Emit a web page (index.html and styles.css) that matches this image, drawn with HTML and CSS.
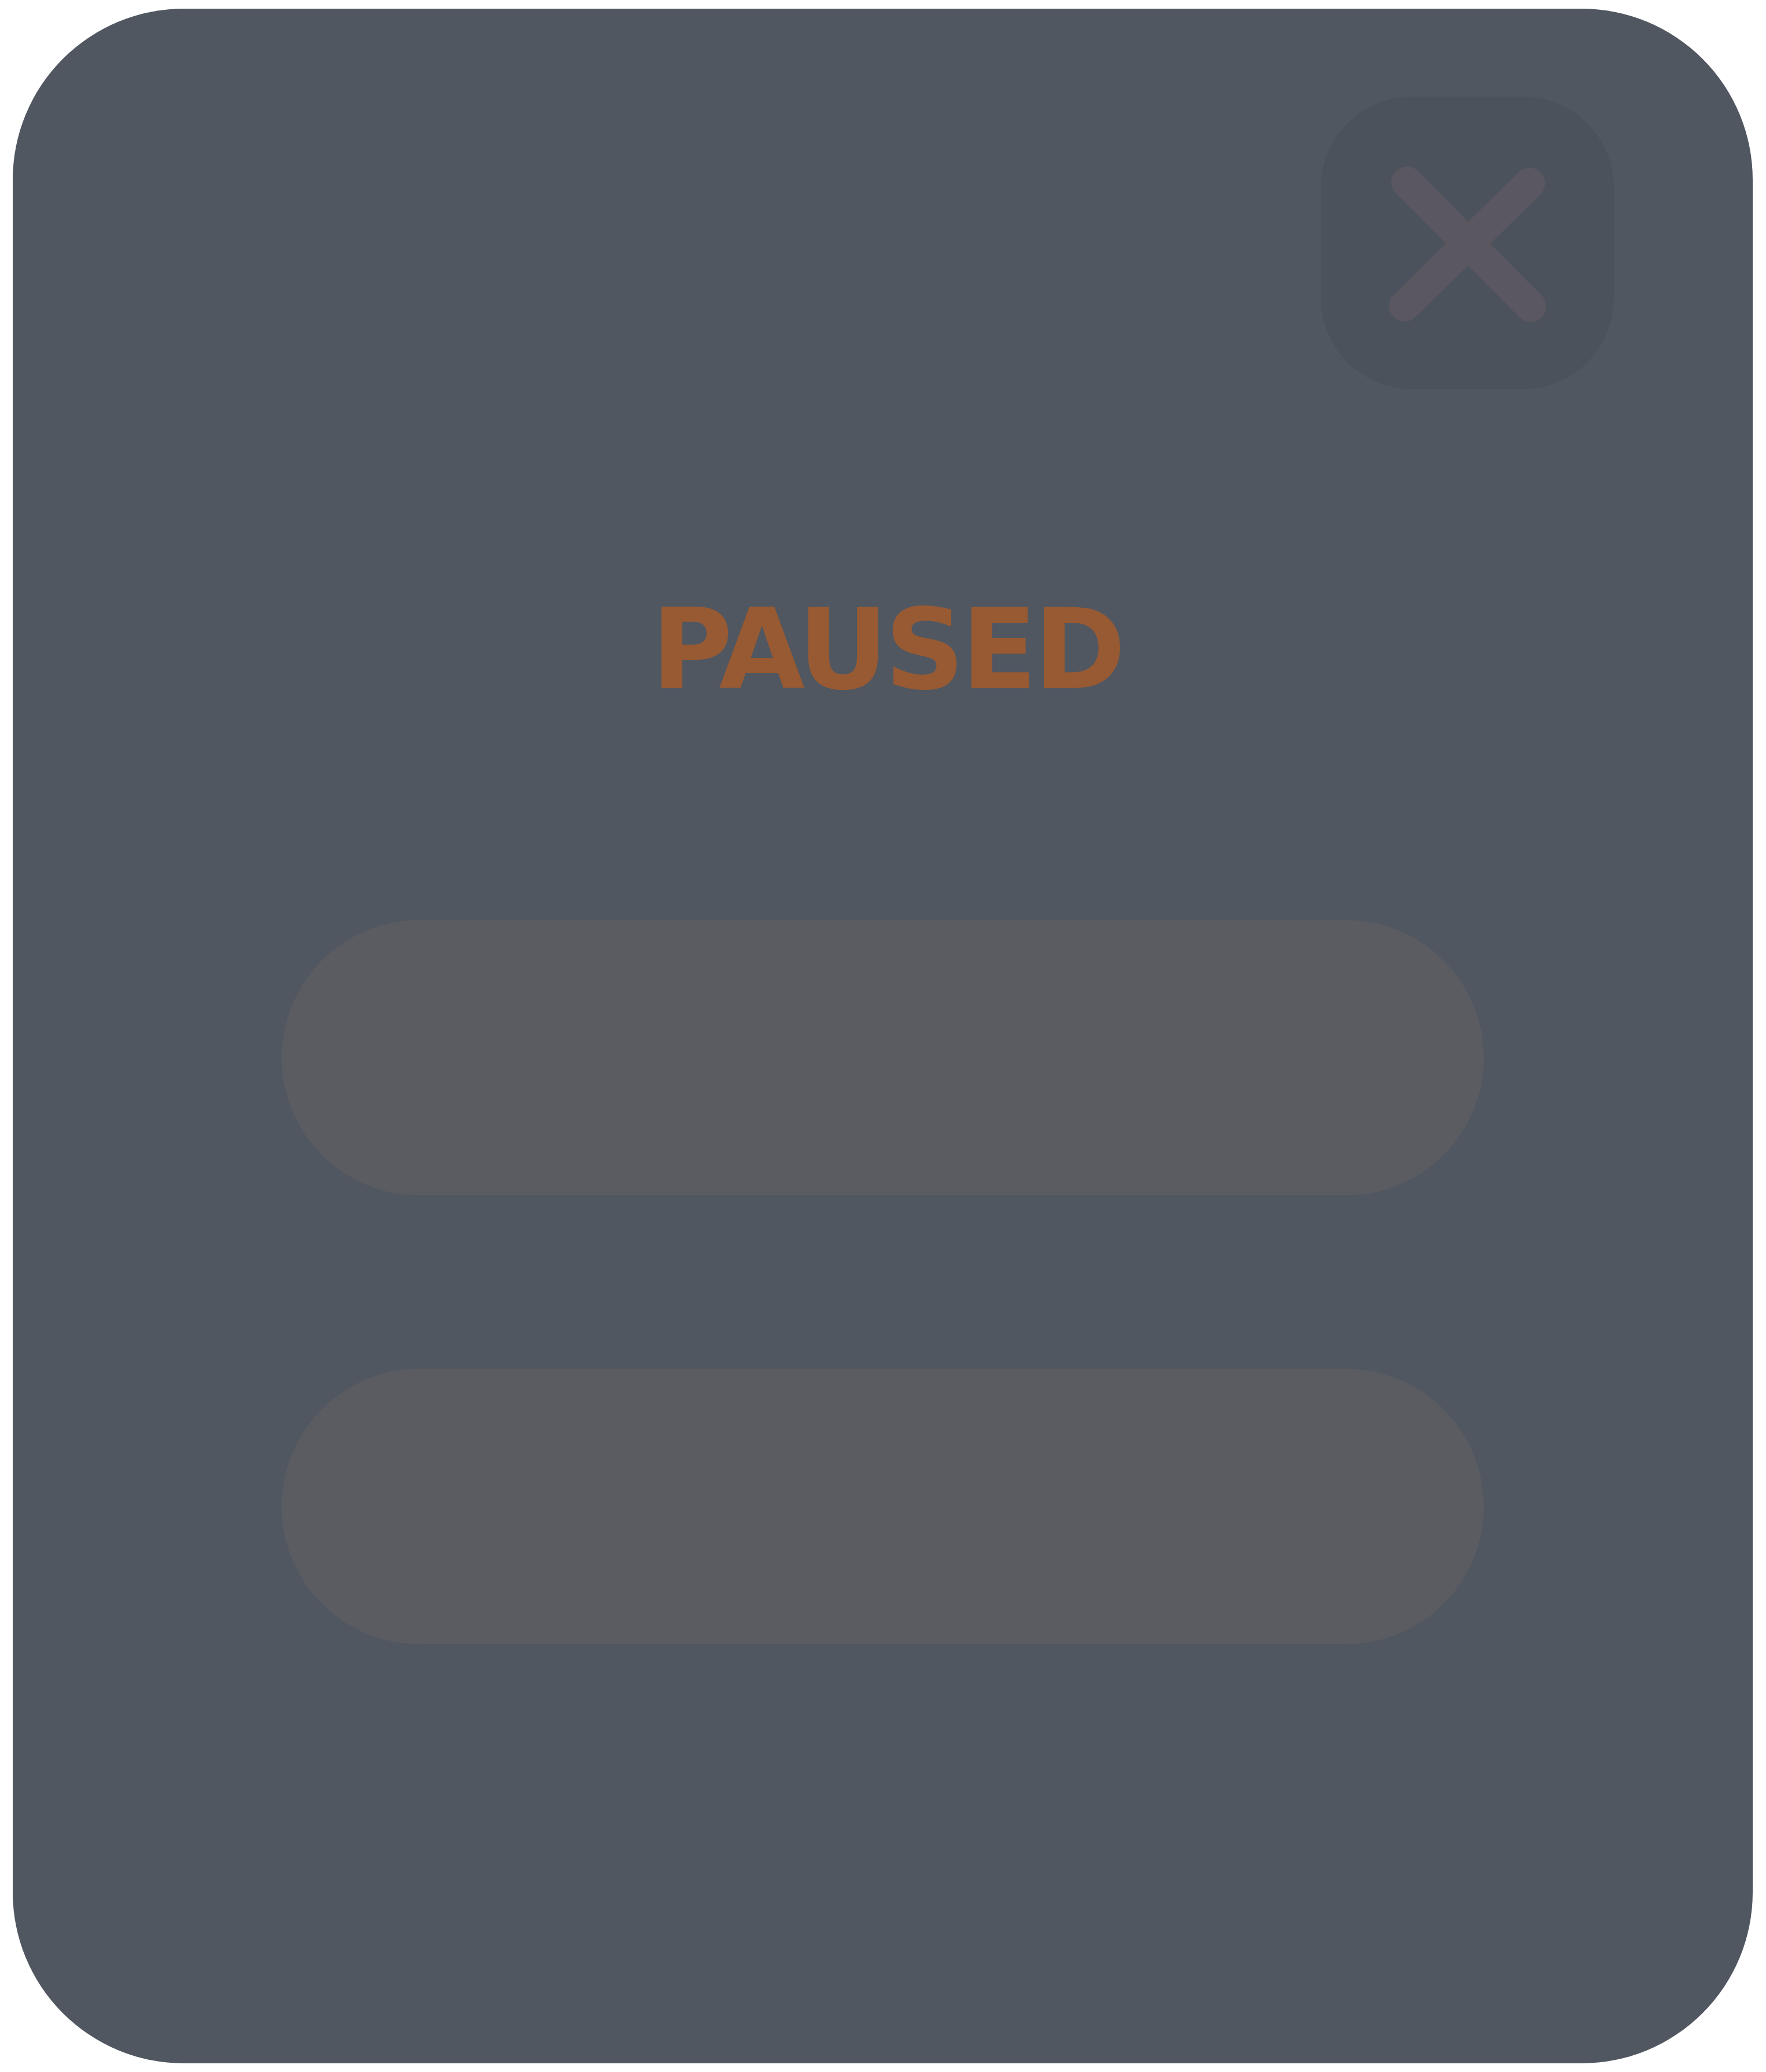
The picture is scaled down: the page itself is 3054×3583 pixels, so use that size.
FILE: index.html
```html
<!DOCTYPE html>
<html lang="en">
<head>
<meta charset="utf-8">
<title>Paused</title>
<link rel="stylesheet" href="styles.css">
</head>
<body>
<div class="card">
  <div class="top">
    <button class="close" aria-label="Close">
      <svg class="close-icon" viewBox="0 0 507 506" width="507" height="506">
        <line x1="149" y1="148" x2="363" y2="363"/>
        <line x1="361" y1="150" x2="145" y2="362"/>
      </svg>
    </button>
  </div>
  <h1 class="title">PAUSED</h1>
  <div class="actions">
    <button class="pill" aria-label="Resume"></button>
    <button class="pill" aria-label="Quit"></button>
  </div>
</div>
</body>
</html>
```
FILE: styles.css
```css
html, body {
  margin: 0;
  padding: 0;
  background: #ffffff;
}
body {
  font-family: "DejaVu Sans", sans-serif;
}
.card {
  box-sizing: border-box;
  width: 3009px;
  height: 3553px;
  margin: 15px 0 15px 22px;
  background: #505761;
  border-radius: 296px;
  padding-top: 152px;
  display: flex;
  flex-direction: column;
  align-items: center;
}
.top {
  align-self: stretch;
  display: flex;
  justify-content: flex-end;
  padding-right: 240px;
}
.close {
  width: 507px;
  height: 506px;
  border: 0;
  padding: 0;
  margin: 0;
  border-radius: 158px;
  background: #4b525c;
  display: flex;
}
.close-icon line {
  stroke: #5a5760;
  stroke-width: 54;
  stroke-linecap: round;
}
.title {
  margin: 355px 0 0 14px;
  font-family: "DejaVu Sans", sans-serif;
  font-weight: 700;
  font-size: 192px;
  line-height: 1;
  color: #985a32;
  letter-spacing: -6px;
}
.actions {
  margin-top: 371px;
  display: flex;
  flex-direction: column;
  gap: 300px;
}
.pill {
  width: 2079px;
  height: 476px;
  border: 0;
  padding: 0;
  margin: 0;
  background: #5b5c62;
  border-radius: 238px;
}
```
